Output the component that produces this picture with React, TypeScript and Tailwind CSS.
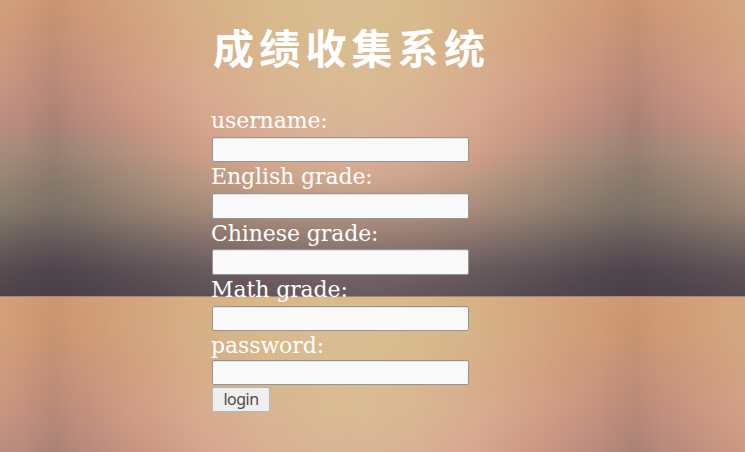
const rows = [0, 36, 72, 112, 152, 182, 212, 242, 272, 302, 328];

const dusk = ['#cf9673', '#c8936f', '#c28f77', '#b98977', '#ab8275', '#9a8072', '#88796c', '#7c7066', '#65595a', '#50454e', '#4a3f48'];
const duskEdge = ['#d19b76', '#d09a75', '#ca957b', '#c4907d', '#b88a7c', '#a5887a', '#917f70', '#827468', '#695d5b', '#534850', '#4c4149'];
const amber = ['#d4a67e', '#d3a57f', '#d3a180', '#d29e86', '#ca9682', '#b9937f', '#a58b79', '#937f70', '#766863', '#5d5156', '#53484f'];
const rose = ['#d8b084', '#d6b188', '#d7ae88', '#d8ac90', '#d7a68e', '#d19f89', '#ba9880', '#a58a79', '#85716c', '#675a5e', '#5d5056'];
const sand = ['#d9b889', '#d8ba8d', '#d8b88d', '#d9b692', '#d9b195', '#dbac94', '#c9a38a', '#b0917f', '#90796f', '#705f63', '#65565a'];
const glow = ['#d9bb8e', '#d9bd91', '#d9bc90', '#dabb93', '#d9b596', '#dbb097', '#cea88e', '#b59482', '#957c75', '#746367', '#695b5f'];
const haze = ['#d5a37c', '#d3a07b', '#d09b7c', '#ca9680', '#bb8e80', '#ab8b7c', '#978674', '#867b6b', '#6e645e', '#594d51', '#4e4348'];

const columns = [
  { x: 0, colors: haze },
  { x: 25, colors: duskEdge },
  { x: 53, colors: dusk },
  { x: 83, colors: duskEdge },
  { x: 140, colors: amber },
  { x: 205, colors: rose },
  { x: 275, colors: sand },
  { x: 335, colors: glow },
  { x: 370, colors: glow },
  { x: 420, colors: sand },
  { x: 480, colors: rose },
  { x: 545, colors: amber },
  { x: 604, colors: duskEdge },
  { x: 634, colors: dusk },
  { x: 664, colors: duskEdge },
  { x: 732, colors: amber },
  { x: 790, colors: rose },
];

function Backdrop() {
  return (
    <div className="grid h-[328px] w-full shrink-0">
      {columns.map(({ x, colors }, i) => {
        const stops = colors.map((c, k) => `${c} ${rows[k]}px`).join(', ');
        const mask =
          i === 0 ? undefined : `linear-gradient(to right, transparent ${columns[i - 1].x}px, black ${x}px)`;
        return (
          <div
            key={x}
            className="col-start-1 row-start-1"
            style={{ backgroundImage: `linear-gradient(to bottom, ${stops})`, maskImage: mask }}
          />
        );
      })}
    </div>
  );
}

function Field({ label, type = 'text', labelClass, inputClass }: {
  label: string;
  type?: string;
  labelClass: string;
  inputClass: string;
}) {
  return (
    <label className="flex flex-col">
      <span className={`block whitespace-nowrap text-[22px] leading-[30px] tracking-[-0.1px] ${labelClass}`}>{label}</span>
      <input
        type={type}
        className={`ml-px block w-[257px] rounded-[2px] border border-[#929697] bg-[#f9f9f9] px-1 font-['Noto_Sans',sans-serif] text-base text-[#444] shadow-[inset_0_1px_0_#e4e4e4] outline-none ${inputClass}`}
      />
    </label>
  );
}

export default function App() {
  return (
    <div className="grid h-[452px] w-[745px] overflow-hidden">
      <div className="col-start-1 row-start-1 flex h-[452px] flex-col overflow-hidden">
        <div className="-mt-8 flex shrink-0 flex-col">
          <Backdrop />
        </div>
        <div className="h-px shrink-0 bg-[#a98674]" />
        <Backdrop />
      </div>
      <main className="z-10 col-start-1 row-start-1 flex h-[452px] flex-col pl-[211px] font-['DejaVu_Serif',serif] text-white">
        <h1 className="mt-[16px] h-[60px] whitespace-nowrap pl-[2px] font-['AR_PL_UKai_CN','KaiTi','STKaiti','Noto_Sans_CJK_SC',sans-serif] text-[41px] leading-[60px] font-bold tracking-[5.2px]">
          成绩收集系统
        </h1>
        <form className="mt-[30px] flex flex-col items-start" onSubmit={(e) => e.preventDefault()}>
          <Field label="username:" labelClass="h-[31px]" inputClass="h-[25px]" />
          <Field label="English grade:" labelClass="h-[31px]" inputClass="h-[26px]" />
          <Field label="Chinese grade:" labelClass="h-[30px]" inputClass="h-[26px]" />
          <Field label="Math grade:" labelClass="h-[31px]" inputClass="h-[25px]" />
          <Field label="password:" type="password" labelClass="h-[29px]" inputClass="h-[25px]" />
          <button className="mt-[2px] ml-px h-[25px] w-[58px] rounded-[2px] border border-[#b4b8ba] bg-[#efefef] pb-px font-['Noto_Sans',sans-serif] text-base leading-[20px] tracking-[-0.5px] text-[#4c4c4c]">
            login
          </button>
        </form>
      </main>
    </div>
  );
}
